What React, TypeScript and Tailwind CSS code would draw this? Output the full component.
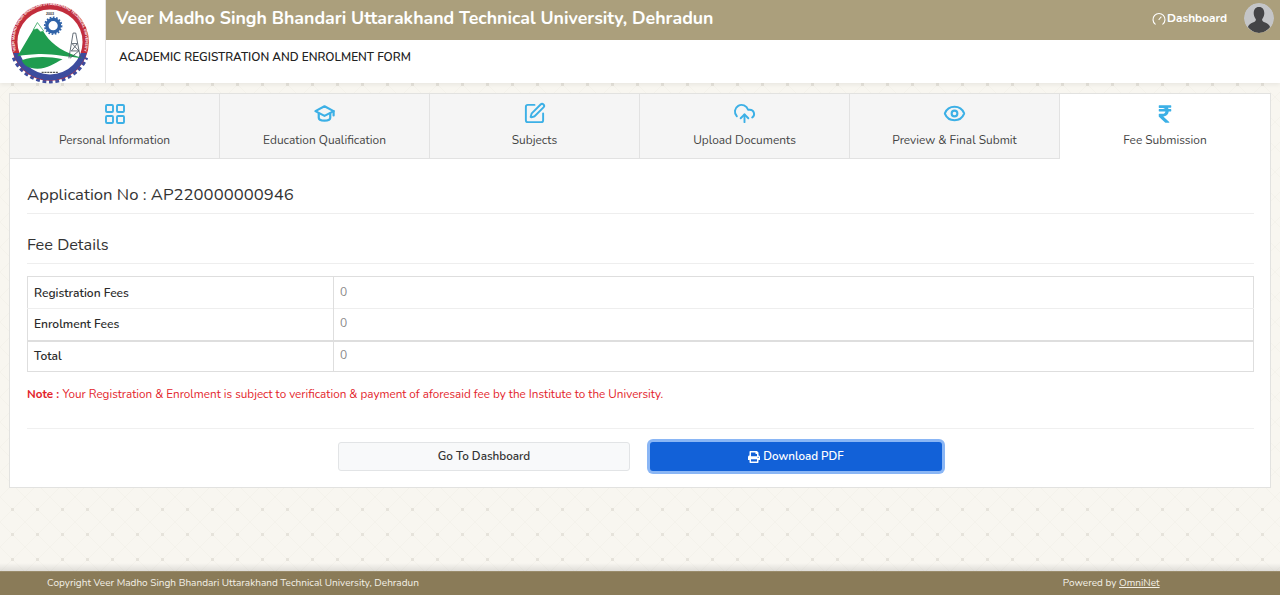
import { LayoutGrid, SquarePen, Eye, CloudUpload } from 'lucide-react';
import { FaPrint, FaRupeeSign } from 'react-icons/fa';

function CapIcon() {
    return (
        <svg width="23" height="23" viewBox="0 0 24 24" fill="none" stroke="currentColor" strokeWidth="2.3" strokeLinecap="round" strokeLinejoin="round">
            <path d="M12 4.500 2.500 9.500 12 14.500l9.500-5z" />
            <path d="M6 12v4.500c0 1.800 2.800 3 6 3s6-1.200 6-3V12" />
            <path d="M21.500 9.500V14" />
        </svg>
    );
}

function GaugeIcon() {
    return (
        <svg width="14" height="14" viewBox="0 0 14 14" fill="none" stroke="currentColor" strokeWidth="1.1" strokeLinecap="round">
            <path d="M3.200 12.100a6 6 0 1 1 7.600 0" />
            <path d="M7 7.500 9 5" />
        </svg>
    );
}

const tabs = [
    { label: 'Personal Information', icon: <LayoutGrid size={24} strokeWidth={1.9} /> },
    { label: 'Education Qualification', icon: <CapIcon /> },
    { label: 'Subjects', icon: <SquarePen size={23} strokeWidth={2} /> },
    { label: 'Upload Documents', icon: <CloudUpload size={23} strokeWidth={2} /> },
    { label: 'Preview & Final Submit', icon: <Eye size={23} strokeWidth={2.2} /> },
];

const fees = [
    { label: 'Registration Fees', value: '0' },
    { label: 'Enrolment Fees', value: '0' },
    { label: 'Total', value: '0' },
];

function Logo() {
    return (
        <svg width="84" height="84" viewBox="2 1.500 80 80">
            <defs>
                <path id="logo-arc" d="M13 57.500a33.800 33.800 0 1 1 58 0" />
            </defs>
            {/* dientes del engranaje */}
            <path d="M8 56a37 37 0 0 0 68 0" fill="none" stroke="#3d4c9e" strokeWidth="5" strokeDasharray="3.500 2.500" />
            <circle cx="42" cy="41.500" r="37" fill="#c22d3c" />
            <path d="M7 52a36.500 36.500 0 0 0 70 0H7z" fill="#3d4c9e" />
            <circle cx="42" cy="41.500" r="31" fill="#fff" />
            <text fontSize="3.500" fontWeight="700" fill="#fff" fontFamily="'Liberation Sans',sans-serif">
                <textPath href="#logo-arc" startOffset="50%" textAnchor="middle">VEER MADHO SINGH BHANDARI UTTARAKHAND TECHNICAL UNIVERSITY</textPath>
            </text>
            <text x="42" y="16" fontSize="3.500" fontWeight="700" textAnchor="middle" fill="#333" fontFamily="'Liberation Sans',sans-serif">2003</text>
            <circle cx="45" cy="26" r="6" fill="#fff" stroke="#2f62a8" strokeWidth="3.200" />
            <circle cx="45" cy="26" r="8" fill="none" stroke="#2f62a8" strokeWidth="1.600" strokeDasharray="1.600 1.500" />
            <path d="M11 55 L30 23 L38 35 C44 44 56 52 74 57 C60 56 46 53 34 53 C26 53 17 54 11 55Z" fill="#1f9c4f" />
            <path d="M30 23 L26 30 L30 29 L33 32 L36 31Z" fill="#fff" stroke="#1f9c4f" strokeWidth="0.600" />
            <path d="M15 59 C26 55 40 55 54 58 C46 62 40 67 30 67 C22 67 17 64 15 59Z" fill="#1f9c4f" />
            <path d="M60 57 L64 33 L66.500 33 L71 57 M62 50 L69.500 50 M63 43 L68 43 M62.500 50 L68 43 M69.500 50 L63 43 M61 57 L69.500 50" fill="none" stroke="#4a5560" strokeWidth="0.800" />
            <path d="M34 70.500h16" stroke="#555" strokeWidth="1.200" strokeDasharray="2 0.700" />
        </svg>
    );
}

function Avatar() {
    return (
        <svg width="30" height="30" viewBox="0 0 30 30" className="rounded-full">
            <circle cx="15" cy="15" r="15" fill="#c4c5c7" />
            <path d="M15 4c3.600 0 5.300 2.600 5.300 6.200 0 2.400-1 4.600-2.200 6 0 1.400.6 2.200 2.400 3 2.600 1 4.600 2 5.600 4.800A15 15 0 0 1 15 30 15 15 0 0 1 3.900 24c1-2.800 3-3.800 5.600-4.800 1.800-.8 2.400-1.600 2.400-3-1.200-1.400-2.200-3.600-2.200-6C9.700 6.600 11.400 4 15 4z" fill="#444446" />
        </svg>
    );
}

export default function App() {
    return (
        <div className="relative h-screen flex flex-col overflow-hidden font-['Nunito','Lato','Noto_Sans',sans-serif] bg-[#f8f6f0] bg-[radial-gradient(circle,#e6e3db_1.5px,transparent_2px),linear-gradient(45deg,transparent_49%,#f4f2eb_49%,#f4f2eb_51%,transparent_51%),linear-gradient(-45deg,transparent_49%,#f4f2eb_49%,#f4f2eb_51%,transparent_51%)] bg-[length:25px_25px] bg-[position:0_-3px]">
            {/* Cabecera */}
            <header className="flex h-[83px] shrink-0 bg-white shadow-[0_2px_4px_rgba(0,0,0,0.06)]">
                <div className="w-[106px] shrink-0 flex items-center pl-[8px] border-r border-[#e4e4e4]">
                    <Logo />
                </div>
                <div className="flex-1 flex flex-col">
                    <div className="h-[40px] bg-[#ab9f7c] flex items-center pl-[10px] pr-[6px] pb-[4px]">
                        <h1 className="text-white font-bold text-[17.75px]">Veer Madho Singh Bhandari Uttarakhand Technical University, Dehradun</h1>
                        <a className="ml-auto flex items-center gap-[1px] text-white font-bold text-[11.8px] pt-[1px]">
                            <GaugeIcon />
                            Dashboard
                        </a>
                        <div className="ml-[17px] h-[30px]">
                            <Avatar />
                        </div>
                    </div>
                    <div className="flex-1 pl-[13px] pt-[9px] text-[11.8px] font-semibold text-[#222]">ACADEMIC REGISTRATION AND ENROLMENT FORM</div>
                </div>
            </header>

            <main className="flex-1 px-[9px] pt-[10px]">
                <div className="bg-white border border-[#e2e2e0]">
                    {/* Pestañas */}
                    <div className="flex h-[65px]">
                        {tabs.map((tab) => (
                            <div key={tab.label} className="w-[210px] bg-[#f5f5f5] border-r border-b border-[#e2e2e2] flex flex-col items-center pt-[8px]">
                                <span className="h-[24px] text-[#3cb0e6]">{tab.icon}</span>
                                <span className="mt-[6px] text-[11.9px] text-[#444]">{tab.label}</span>
                            </div>
                        ))}
                        <div className="flex-1 flex flex-col items-center pt-[8px]">
                            <span className="h-[24px] flex items-center text-[#3cb0e6]"><FaRupeeSign size={20} /></span>
                            <span className="mt-[6px] text-[11.9px] text-[#444]">Fee Submission</span>
                        </div>
                    </div>

                    <div className="pl-[17px] pr-[16px]">
                        <div className="h-[55px] flex items-center pt-[18px] border-b border-[#eee]">
                            <h2 className="text-[16.7px] text-[#333]">Application No : AP220000000946</h2>
                        </div>
                        <div className="h-[50px] flex items-center pt-[13px] border-b border-[#eee]">
                            <h3 className="text-[16.3px] text-[#333]">Fee Details</h3>
                        </div>

                        <table className="mt-[12px] w-full border border-[#dedede] text-[12px]">
                            <tbody>
                                {fees.map((row, i) => (
                                    <tr key={row.label} className={i === 1 ? 'h-[32px] border-b-2 border-[#dedede]' : i === 0 ? 'h-[32px] border-b border-[#eee]' : 'h-[31px]'}>
                                        <th className="w-[306px] pl-[6px] text-left font-semibold text-[#2b2b2b] border-r border-[#dedede]">{row.label}</th>
                                        <td className="px-[6px] pb-[2px] text-[#888]">{row.value}</td>
                                    </tr>
                                ))}
                            </tbody>
                        </table>

                        <p className="mt-[14px] text-[11.7px] text-[#e3242b]">
                            <b className="font-bold">Note : </b>
                            Your Registration &amp; Enrolment is subject to verification &amp; payment of aforesaid fee by the Institute to the University.
                        </p>

                        <div className="mt-[24px] pt-[13px] pb-[16px] pr-[1px] border-t border-[#f0f0f0] flex justify-center gap-[20px]">
                            <button className="w-[292px] h-[29px] pt-[2px] bg-[#f8f9fa] border border-[#e2e4e6] rounded-[3px] text-[11.7px] font-semibold text-[#333]">Go To Dashboard</button>
                            <button className="w-[292px] h-[29px] pt-[2px] bg-[#1261d8] rounded-[3px] ring-[3px] ring-[#8ab6f5] text-[11.6px] font-semibold text-white flex items-center justify-center gap-[3px]">
                                <FaPrint size={12} />
                                Download PDF
                            </button>
                        </div>
                    </div>
                </div>
            </main>

            <div className="h-[8px] -mt-[8px] shrink-0 bg-gradient-to-b from-transparent to-black/10" />
            <footer className="h-[24px] shrink-0 bg-[#8a7b58] border-t border-[#9a8c6b] flex items-center pl-[47px] text-[10.04px] text-[#f3f0e6]">
                <span>Copyright Veer Madho Singh Bhandari Uttarakhand Technical University, Dehradun</span>
                <span className="ml-[644px]">Powered by <a className="underline">OmniNet</a></span>
            </footer>
        </div>
    );
}
